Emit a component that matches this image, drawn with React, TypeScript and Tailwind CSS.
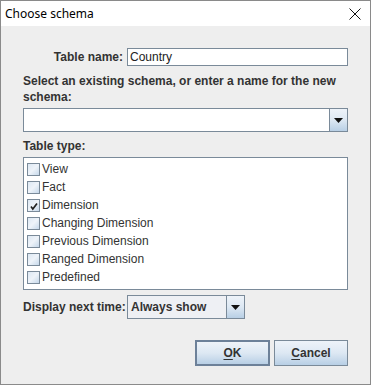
import React from 'react'

const items = [
  { label: 'View', checked: false },
  { label: 'Fact', checked: false },
  { label: 'Dimension', checked: true },
  { label: 'Changing Dimension', checked: false },
  { label: 'Previous Dimension', checked: false },
  { label: 'Ranged Dimension', checked: false },
  { label: 'Predefined', checked: false },
]

function Arrow() {
  return (
    <svg width="9" height="5" viewBox="0 0 9 5">
      <path d="M0 0H9L4.5 5Z" fill="#111" />
    </svg>
  )
}

function ArrowButton({ className }: { className: string }) {
  return (
    <div
      className={`flex items-center justify-center border-l border-[#7a8a99] bg-gradient-to-b from-[#eef3f9] via-[#dde8f3] to-[#b8cfe5] ${className}`}
    >
      <Arrow />
    </div>
  )
}

function CheckBox({ checked }: { checked: boolean }) {
  return (
    <div className="relative h-[13px] w-[13px] shrink-0 border border-[#7a8a99] bg-gradient-to-br from-[#dde8f3] via-[#eef3f9] to-[#c6d8ea]">
      {checked && (
        <svg className="absolute left-[1px] top-[1px]" width="10" height="10" viewBox="0 0 10 10">
          <path d="M2 5.5 L3.8 8 L8 2.5" stroke="#222" strokeWidth="1.7" fill="none" />
        </svg>
      )}
    </div>
  )
}

export default function App() {
  return (
    <div
      className="flex h-[385px] w-[371px] flex-col border border-[#8a8a8a] bg-[#eeeeee] text-[12px] text-[#333333]"
      style={{ fontFamily: '"Liberation Sans", Arial, sans-serif' }}
    >
      <div className="flex h-[25px] shrink-0 items-center justify-between bg-white pl-[4px] pr-[9px]">
        <span className="text-[12px] text-black" style={{ fontFamily: '"Noto Sans", "Open Sans", sans-serif' }}>
          Choose schema
        </span>
        <svg width="12" height="12" viewBox="0 0 12 12">
          <path d="M0.5 0.5L11.5 11.5M11.5 0.5L0.5 11.5" stroke="#111" strokeWidth="1" />
        </svg>
      </div>

      <div className="flex flex-1 flex-col px-[22px] pt-[22px]">
        <div className="flex h-[18px] items-center">
          <span className="w-[100px] text-right font-bold">Table name:</span>
          <div className="ml-[4px] flex h-[18px] flex-1 items-center border border-[#7a8a99] bg-white pl-[2px] text-[#222]">
            Country
          </div>
        </div>

        <div className="mt-[7px] font-bold leading-[16px]">
          Select an existing schema, or enter a name for the new schema:
        </div>

        <div className="mt-[3px] flex h-[24px] border border-[#7a8a99] bg-white">
          <div className="flex-1" />
          <ArrowButton className="w-[18px]" />
        </div>

        <div className="mt-[6px] font-bold leading-[16px]">Table type:</div>

        <div className="mt-[3px] flex h-[133px] flex-col border border-[#7a8a99] bg-white pl-[3px] pt-[2px]">
          {items.map((it) => (
            <div key={it.label} className="flex h-[18px] items-center gap-[2px]">
              <CheckBox checked={it.checked} />
              <span>{it.label}</span>
            </div>
          ))}
        </div>

        <div className="mt-[5px] flex h-[24px] items-center">
          <span className="w-[100px] whitespace-nowrap font-bold">Display next time:</span>
          <div className="ml-[4px] flex h-[24px] w-[118px] border border-[#7a8a99] bg-[#eef0f4]">
            <div className="flex flex-1 items-center pl-[3px] font-bold">Always show</div>
            <ArrowButton className="w-[18px]" />
          </div>
        </div>

        <div className="mt-[21px] flex justify-end gap-[4px]">
          <button className="flex h-[26px] w-[75px] items-center justify-center border-2 border-[#6d8199] bg-gradient-to-b from-[#eef3f9] via-[#dde8f3] to-[#b8cfe5] font-bold text-[#333]">
            <span className="underline decoration-1 underline-offset-2">O</span>K
          </button>
          <button className="flex h-[26px] w-[74px] items-center justify-center border border-[#7a8a99] bg-gradient-to-b from-[#eef3f9] via-[#dde8f3] to-[#b8cfe5] font-bold text-[#333]">
            <span className="underline decoration-1 underline-offset-2">C</span>ancel
          </button>
        </div>
      </div>
    </div>
  )
}
